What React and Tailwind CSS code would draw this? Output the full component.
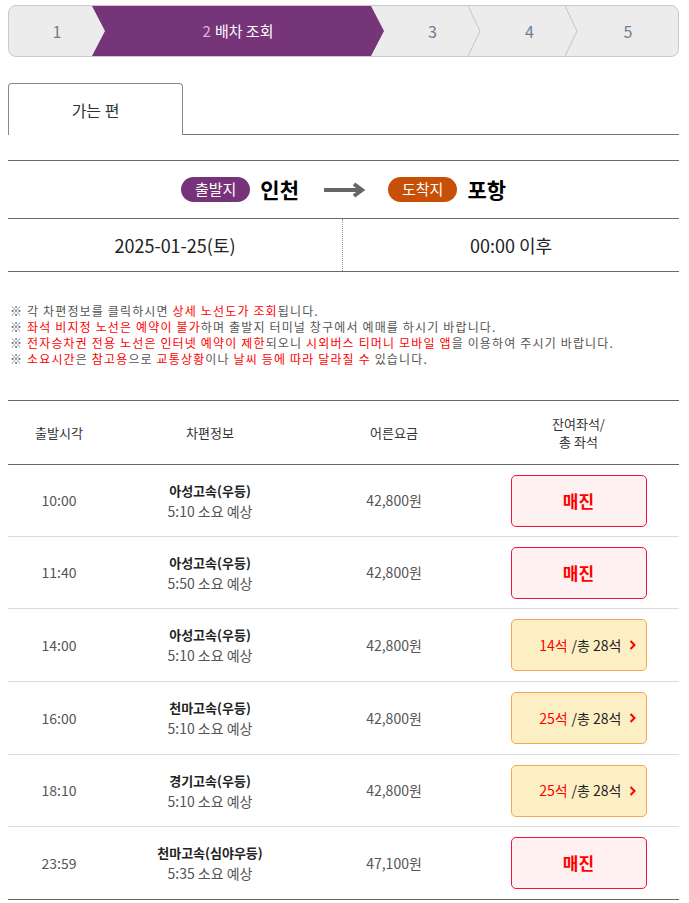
import React from "react";

const rows = [
  { time: "10:00", name: "아성고속(우등)", dur: "5:10", price: "42,800원", seat: null, h: "h-[72px]" },
  { time: "11:40", name: "아성고속(우등)", dur: "5:50", price: "42,800원", seat: null, h: "h-[72px]" },
  { time: "14:00", name: "아성고속(우등)", dur: "5:10", price: "42,800원", seat: 14, h: "h-[73px]" },
  { time: "16:00", name: "천마고속(우등)", dur: "5:10", price: "42,800원", seat: 25, h: "h-[73px]" },
  { time: "18:10", name: "경기고속(우등)", dur: "5:10", price: "42,800원", seat: 25, h: "h-[72px]" },
  { time: "23:59", name: "천마고속(심야우등)", dur: "5:35", price: "47,100원", seat: null, h: "h-[72px]" },
];

// thin chevron between steps
const StepSep = () => (
  <svg className="absolute right-0 top-0 h-[50px] w-[13px]" viewBox="0 0 13 50">
    <polyline points="0,0 12,25 0,50" fill="none" stroke="#c4c4c4" strokeWidth="1" />
  </svg>
);

const Steps = () => (
  <div className="mt-[5px] flex h-[52px] overflow-hidden rounded-[8px] border border-[#c9c9c9] bg-[#ececec] text-[16px] text-[#6d7f93]">
    <div className="flex w-[83px] items-center justify-center pl-[13px]">1</div>
    <div className="flex w-[292px] items-center justify-center bg-[#763479] text-[15px] text-white [clip-path:polygon(0_0,calc(100%_-_13px)_0,100%_50%,calc(100%_-_13px)_100%,0_100%,13px_50%)]">
      <span className="mr-[4px] text-[#d9b3dc]">2</span>배차 조회
    </div>
    <div className="relative flex w-[97px] items-center justify-center">
      3
      <StepSep />
    </div>
    <div className="relative flex w-[97px] items-center justify-center">
      4
      <StepSep />
    </div>
    <div className="flex flex-1 items-center justify-center">5</div>
  </div>
);

const Red = ({ children }) => <span className="text-[#ff0000]">{children}</span>;

const SeatButton = ({ seat }) => {
  if (!seat) {
    return (
      <div className="flex h-[52px] w-[136px] items-center justify-center rounded-[5px] border border-[#f2143c] bg-[#fff1f1] text-[17px] font-bold text-[#ff0000]">
        매진
      </div>
    );
  }
  return (
    <div className="flex h-[52px] w-[136px] items-center justify-end rounded-[5px] border border-[#f5a64e] bg-[#fdefc4] pr-[10px] text-[14px] text-[#222]">
      <span className="text-[#ff0000]">{seat}석</span>
      <span className="ml-[4px]">/총 28석</span>
      <svg className="ml-[7px] h-[10px] w-[7px]" viewBox="0 0 7 10">
        <polyline points="1.5,1 5.5,5 1.5,9" fill="none" stroke="#ff0000" strokeWidth="2" />
      </svg>
    </div>
  );
};

export default function App() {
  return (
    <div className="min-h-screen bg-white pl-[8px] pr-[10px] font-['Noto_Sans_CJK_KR','Noto_Sans',sans-serif] text-[#333]">
      <Steps />

      {/* tab */}
      <div className="mt-[26px] flex items-end">
        <div className="flex h-[52px] w-[175px] items-center justify-center rounded-t-[4px] border border-b-0 border-[#888] text-[16px] text-[#333]">
          가는 편
        </div>
        <div className="h-[52px] flex-1 border-b border-[#777]" />
      </div>

      {/* route */}
      <div className="mt-[25px] border-t border-[#6a6a6a]">
        <div className="flex h-[57px] items-center justify-center">
          <span className="flex h-[25px] items-center rounded-full bg-[#77337a] px-[14px] text-[15px] text-white">출발지</span>
          <span className="ml-[10px] text-[21px] font-bold text-black">인천</span>
          <svg className="ml-[25px] h-[16px] w-[41px]" viewBox="0 0 41 16">
            <line x1="0" y1="8" x2="35" y2="8" stroke="#666" strokeWidth="4" />
            <polyline points="30,2 38,8 30,14" fill="none" stroke="#666" strokeWidth="4" />
          </svg>
          <span className="ml-[23px] flex h-[25px] items-center rounded-full bg-[#c84f07] px-[14px] text-[15px] text-white">도착지</span>
          <span className="ml-[10px] text-[21px] font-bold text-black">포항</span>
        </div>
        <div className="flex h-[54px] border-y border-[#6a6a6a] text-[18px] text-[#222]">
          <div className="flex w-[335px] items-center justify-center border-r border-dotted border-[#999]">2025-01-25(토)</div>
          <div className="flex flex-1 items-center justify-center">00:00 이후</div>
        </div>
      </div>

      {/* notes */}
      <div className="mt-[31px] pl-[2px] text-[12px] leading-[16px] tracking-[1.15px] text-[#555]">
        <p>※ 각 차편정보를 클릭하시면 <Red>상세 노선도가 조회</Red>됩니다.</p>
        <p>※ <Red>좌석 비지정 노선은 예약이 불가</Red>하며 출발지 터미널 창구에서 예매를 하시기 바랍니다.</p>
        <p>※ <Red>전자승차권 전용 노선은 인터넷 예약이 제한</Red>되오니 <Red>시외버스 티머니 모바일 앱</Red>을 이용하여 주시기 바랍니다.</p>
        <p>※ <Red>소요시간</Red>은 <Red>참고용</Red>으로 <Red>교통상황</Red>이나 <Red>날씨 등에 따라 달라질 수</Red> 있습니다.</p>
      </div>

      {/* table */}
      <div className="mt-[33px] border-y border-[#666]">
        <div className="flex h-[64px] items-center border-b border-[#666] text-[13px] text-[#333]">
          <div className="w-[102px] text-center">출발시각</div>
          <div className="w-[200px] text-center">차편정보</div>
          <div className="w-[168px] text-center">어른요금</div>
          <div className="flex-1 text-center leading-[18px]">
            잔여좌석/
            <br />
            총 좌석
          </div>
        </div>
        {rows.map((r, i) => (
          <div
            key={i}
            className={`flex ${r.h} items-center text-[14px] text-[#555] ${i < rows.length - 1 ? "border-b border-[#dcdcdc]" : ""}`}
          >
            <div className="w-[102px] text-center">{r.time}</div>
            <div className="w-[200px] text-center leading-[20px]">
              <div className="text-[13px] font-bold text-[#222]">{r.name}</div>
              <div>{r.dur} 소요 예상</div>
            </div>
            <div className="w-[168px] text-center">{r.price}</div>
            <div className="flex flex-1 justify-center">
              <SeatButton seat={r.seat} />
            </div>
          </div>
        ))}
      </div>
    </div>
  );
}
